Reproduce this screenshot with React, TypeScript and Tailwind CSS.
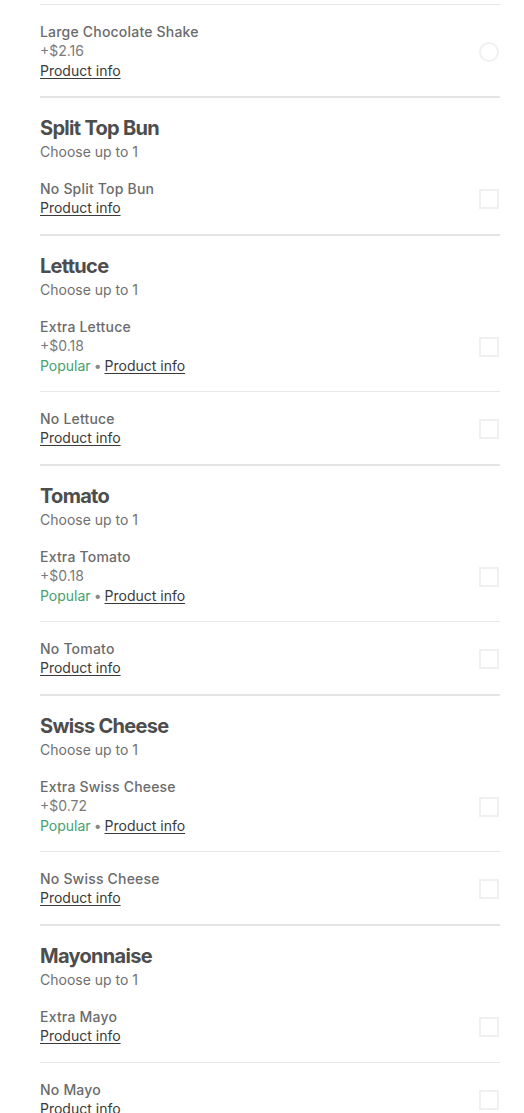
type Item = {
    name: string;
    price?: string;
    popular?: boolean;
    radio?: boolean;
};

type Section = {
    title: string;
    items: Item[];
};

const sections: Section[] = [
    { title: "Split Top Bun", items: [{ name: "No Split Top Bun" }] },
    {
        title: "Lettuce",
        items: [
            { name: "Extra Lettuce", price: "+$0.18", popular: true },
            { name: "No Lettuce" },
        ],
    },
    {
        title: "Tomato",
        items: [
            { name: "Extra Tomato", price: "+$0.18", popular: true },
            { name: "No Tomato" },
        ],
    },
    {
        title: "Swiss Cheese",
        items: [
            { name: "Extra Swiss Cheese", price: "+$0.72", popular: true },
            { name: "No Swiss Cheese" },
        ],
    },
    {
        title: "Mayonnaise",
        items: [{ name: "Extra Mayo" }, { name: "No Mayo" }],
    },
];

function OptionRow({ item }: { item: Item }) {
    return (
        <div
            className={
                item.price
                    ? "flex items-center justify-between pt-[18px] pb-[15px]"
                    : "flex items-center justify-between pt-[18px] pb-4"
            }
        >
            <div className="flex flex-col">
                <span className="text-[14px] leading-[18px] font-medium text-[#6b6b6b] tracking-[0.2px]">
                    {item.name}
                </span>
                {item.price && (
                    <span className="text-[14px] leading-5 text-[#7a7a7a]">
                        {item.price}
                    </span>
                )}
                <span className="text-[14px] leading-5">
                    {item.popular && (
                        <>
                            <span className="text-[#46a06f]">Popular</span>
                            <span className="text-[#8a8a8a] mx-[3px]">•</span>
                        </>
                    )}
                    <span className="text-[#3a3a3a] underline underline-offset-2">
                        Product info
                    </span>
                </span>
            </div>
            {item.radio ? (
                <div className="w-5 h-5 rounded-full border-2 border-[#f0f0f0] mr-[1px]" />
            ) : (
                <div className="w-5 h-5 border-2 border-[#f0f0f0] mr-[1px]" />
            )}
        </div>
    );
}

export default function App() {
    return (
        <div
            className="bg-white min-h-screen pl-10 pr-6 pt-1"
            style={{ fontFamily: "Inter, 'Noto Sans', sans-serif" }}
        >
            <div className="h-px bg-[#e8e8e8]" />
            <OptionRow
                item={{ name: "Large Chocolate Shake", price: "+$2.16", radio: true }}
            />
            {sections.map((s) => (
                <div key={s.title}>
                    <div className="h-[2px] bg-[#e4e4e4]" />
                    <div className="pt-4">
                        <h2 className="text-[20px] leading-7 font-bold text-[#4d4d4d] tracking-[-0.7px]">
                            {s.title}
                        </h2>
                        <p className="text-[14px] leading-5 text-[#6f6f6f]">
                            Choose up to 1
                        </p>
                    </div>
                    {s.items.map((it, idx) => (
                        <div key={it.name}>
                            {idx > 0 && <div className="h-px bg-[#e8e8e8]" />}
                            <OptionRow item={it} />
                        </div>
                    ))}
                </div>
            ))}
        </div>
    );
}
